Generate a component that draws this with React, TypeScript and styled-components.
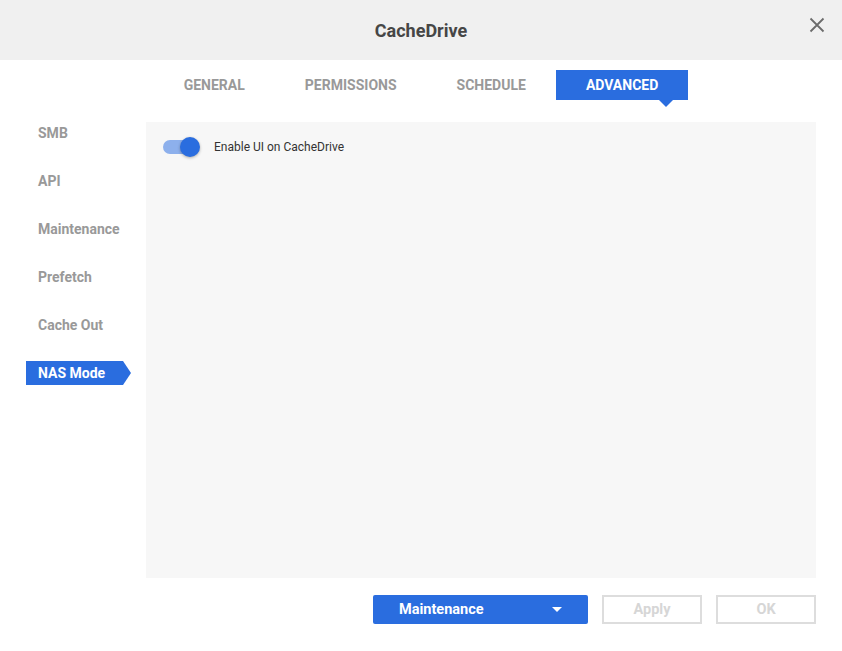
import { useState } from "react";
import styled, { createGlobalStyle } from "styled-components";

const BLUE = "#2a6ddf";

const GlobalStyle = createGlobalStyle`
  html, body {
    margin: 0;
    padding: 0;
    background: #ffffff;
  }
  body {
    font-family: Roboto, "Liberation Sans", Arial, sans-serif;
  }
  * {
    box-sizing: border-box;
  }
`;

const tabs = ["General", "Permissions", "Schedule", "Advanced"];
const sections = ["SMB", "API", "Maintenance", "Prefetch", "Cache Out", "NAS Mode"];

export default function App() {
  const [tab, setTab] = useState("Advanced");
  const [section, setSection] = useState("NAS Mode");
  const [enabled, setEnabled] = useState(true);

  return (
    <>
      <GlobalStyle />
      <Dialog>
        <Header>
          <span />
          <Title>CacheDrive</Title>
          <CloseButton aria-label="Close">
            <svg width="16" height="16" viewBox="0 0 16 16">
              <path d="M1.5 1.5 L14.5 14.5 M14.5 1.5 L1.5 14.5" stroke="#6b6b6b" strokeWidth="1.8" />
            </svg>
          </CloseButton>
        </Header>

        <TabBar>
          {tabs.map((t) => (
            <Tab key={t} $active={t === tab} onClick={() => setTab(t)}>
              {t}
            </Tab>
          ))}
        </TabBar>

        <Body>
          <Sidebar>
            {sections.map((s) => (
              <SideItem key={s} $active={s === section} onClick={() => setSection(s)}>
                {s}
              </SideItem>
            ))}
          </Sidebar>
          <Panel>
            <ToggleRow>
              <Switch $on={enabled} onClick={() => setEnabled(!enabled)}>
                <Knob $on={enabled} />
              </Switch>
              <ToggleLabel>Enable UI on CacheDrive</ToggleLabel>
            </ToggleRow>
          </Panel>
        </Body>

        <Footer>
          <DropButton>
            <span>Maintenance</span>
            <Caret />
          </DropButton>
          <GhostButton disabled>Apply</GhostButton>
          <GhostButton disabled>OK</GhostButton>
        </Footer>
      </Dialog>
    </>
  );
}

const Dialog = styled.div`
  width: 842px;
  height: 651px;
  display: flex;
  flex-direction: column;
  background: #ffffff;
`;

const Header = styled.div`
  height: 60px;
  background: #f0f0f0;
  display: grid;
  grid-template-columns: 1fr auto 1fr;
  align-items: center;
  padding: 0 17px;
`;

const Title = styled.h1`
  margin: 0;
  font-size: 18px;
  font-weight: 700;
  color: #464646;
`;

const CloseButton = styled.button`
  justify-self: end;
  border: 0;
  background: none;
  padding: 0;
  width: 16px;
  height: 16px;
  margin-top: -10px;
  display: flex;
  cursor: pointer;
`;

const TabBar = styled.div`
  display: flex;
  justify-content: center;
  margin-top: 10px;
  height: 30px;
`;

const Tab = styled.div<{ $active: boolean }>`
  position: relative;
  display: flex;
  align-items: center;
  padding: 0 30px;
  height: 30px;
  padding-bottom: 1px;
  font-size: 14px;
  font-weight: 700;
  text-transform: uppercase;
  color: ${(p) => (p.$active ? "#ffffff" : "#999999")};
  background: ${(p) => (p.$active ? BLUE : "transparent")};
  cursor: pointer;

  &::after {
    content: "";
    display: ${(p) => (p.$active ? "block" : "none")};
    position: absolute;
    top: 30px;
    right: 15px;
    border-left: 7px solid transparent;
    border-right: 7px solid transparent;
    border-top: 7px solid ${BLUE};
  }
`;

const Body = styled.div`
  display: flex;
  margin-top: 22px;
  height: 456px;
`;

const Sidebar = styled.div`
  width: 146px;
  display: flex;
  flex-direction: column;
  gap: 24px;
  margin-top: -1px;
`;

const SideItem = styled.div<{ $active: boolean }>`
  position: relative;
  height: 24px;
  width: 97px;
  margin-left: 26px;
  padding-left: 12px;
  display: flex;
  align-items: center;
  font-size: 14px;
  font-weight: 700;
  color: ${(p) => (p.$active ? "#ffffff" : "#999999")};
  background: ${(p) => (p.$active ? BLUE : "transparent")};
  cursor: pointer;

  &::after {
    content: "";
    display: ${(p) => (p.$active ? "block" : "none")};
    position: absolute;
    left: 97px;
    top: 0;
    border-top: 12px solid transparent;
    border-bottom: 12px solid transparent;
    border-left: 8px solid ${BLUE};
  }
`;

const Panel = styled.div`
  flex: 1;
  margin-right: 26px;
  background: #f7f7f7;
  padding: 15px 17px;
`;

const ToggleRow = styled.div`
  display: flex;
  align-items: center;
  height: 20px;
  gap: 17px;
`;

const Switch = styled.div<{ $on: boolean }>`
  position: relative;
  width: 34px;
  height: 14px;
  border-radius: 7px;
  background: ${(p) => (p.$on ? "#8db0ec" : "#c4c4c4")};
  cursor: pointer;
`;

const Knob = styled.div<{ $on: boolean }>`
  position: absolute;
  top: -3px;
  left: ${(p) => (p.$on ? "17px" : "-3px")};
  width: 20px;
  height: 20px;
  border-radius: 50%;
  background: ${(p) => (p.$on ? BLUE : "#f1f1f1")};
  box-shadow: 0 1px 3px rgba(0, 0, 0, 0.3);
`;

const ToggleLabel = styled.span`
  font-size: 12px;
  color: #333333;
`;

const Footer = styled.div`
  display: flex;
  justify-content: flex-end;
  gap: 14px;
  margin-top: 17px;
  padding-right: 26px;
`;

const DropButton = styled.button`
  width: 215px;
  height: 29px;
  border: 0;
  border-radius: 2px;
  background: ${BLUE};
  color: #ffffff;
  font-family: inherit;
  font-size: 14.5px;
  font-weight: 700;
  display: flex;
  align-items: center;
  justify-content: space-between;
  padding: 0 26px;
  padding-bottom: 1px;
  cursor: pointer;
`;

const Caret = styled.span`
  width: 0;
  height: 0;
  border-left: 5px solid transparent;
  border-right: 5px solid transparent;
  border-top: 5px solid #ffffff;
`;

const GhostButton = styled.button`
  width: 100px;
  height: 29px;
  border: 2px solid #dddddd;
  background: #ffffff;
  color: #d6d6d6;
  font-family: inherit;
  font-size: 14.5px;
  font-weight: 700;
  padding-bottom: 1px;
`;
